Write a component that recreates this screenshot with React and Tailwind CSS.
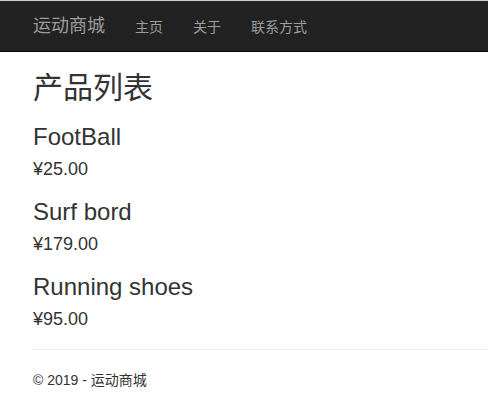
const font = { fontFamily: '"Liberation Sans", "Noto Sans CJK SC", sans-serif' };

const products = [
  { name: "FootBall", price: "¥25.00" },
  { name: "Surf bord", price: "¥179.00" },
  { name: "Running shoes", price: "¥95.00" },
];

function NavBar() {
  return (
    <div className="border-t border-[#cdcdcd]">
      <nav className="h-[51px] bg-[#222222] border-b border-[#080808] flex items-center pl-[18px]">
        <a className="px-[15px] text-[18px] leading-[20px] text-[#9d9d9d]">运动商城</a>
        <ul className="flex">
          <li className="px-[15px] text-[14px] leading-[20px] text-[#9d9d9d] pt-[1px]">主页</li>
          <li className="px-[15px] text-[14px] leading-[20px] text-[#9d9d9d] pt-[1px]">关于</li>
          <li className="px-[15px] text-[14px] leading-[20px] text-[#9d9d9d] pt-[1px]">联系方式</li>
        </ul>
      </nav>
    </div>
  );
}

export default function App() {
  return (
    <div className="min-h-[415px] bg-white text-[#333333]" style={font}>
      <NavBar />
      <main className="pl-[33px] pt-[19px]">
        <h2 className="text-[30px] leading-[33px] font-normal">产品列表</h2>
        {products.map((p) => (
          <div key={p.name}>
            <h3 className="mt-[20px] mb-[10px] text-[24px] leading-[26px] font-normal">{p.name}</h3>
            <h4 className="text-[18px] leading-[19px] font-normal">{p.price}</h4>
          </div>
        ))}
        <hr className="mt-[20px] border-t border-[#eeeeee]" />
        <footer className="pt-[20px]">
          <p className="text-[14px] leading-[20px]">© 2019 - 运动商城</p>
        </footer>
      </main>
    </div>
  );
}
